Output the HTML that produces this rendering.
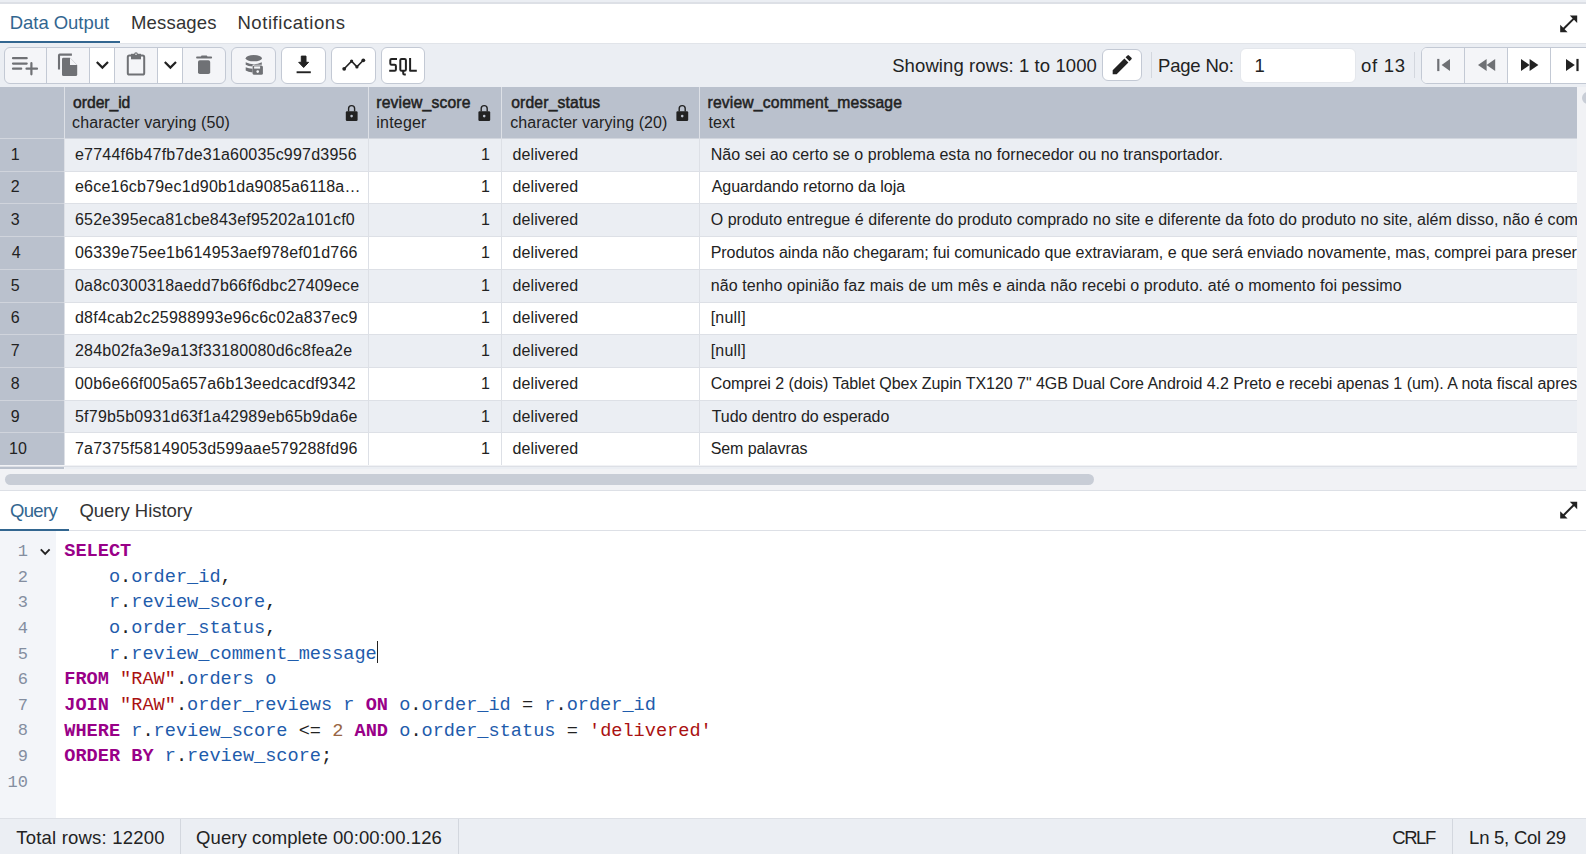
<!DOCTYPE html><html><head><meta charset="utf-8"><style>
*{box-sizing:border-box}
html,body{margin:0;padding:0}
body{width:1586px;height:854px;overflow:hidden;position:relative;background:#fff;font-family:"Liberation Sans",sans-serif;color:#222}
.a{position:absolute}
.t{position:absolute;white-space:pre;font-family:"Liberation Sans",sans-serif}
.row{position:absolute;left:65px;width:1512px;border-bottom:1px solid #dde0e6}
.code{position:absolute;left:64.3px;font-family:"Liberation Mono",monospace;font-size:18.6px;line-height:18.6px;white-space:pre}
.ln{position:absolute;left:0;width:28px;text-align:right;font-family:"Liberation Mono",monospace;font-size:17px;line-height:17px;color:#848ea0}
.btn{position:absolute;top:47px;height:37px;border:1px solid #c3c9d4;background:#fff}
.dis{background:#f4f5f8}
</style></head><body><div class="a" style="left:0;top:0;width:1586px;height:2px;background:#ebeef3"></div>
<div class="a" style="left:0;top:2px;width:1586px;height:2px;background:#dde0e6"></div>
<div class="a" style="left:0;top:41px;width:120px;height:2px;background:#326690"></div>
<div class="a" style="left:0;top:43px;width:1586px;height:44px;background:#ebeef3"></div>
<div class="a" style="left:120px;top:43px;width:1466px;height:1px;background:#e1e4e9"></div>
<div class="btn dis" style="left:4px;width:222px;border-radius:6px;overflow:hidden"><div class="a" style="left:85px;top:0;width:25px;height:35px;background:#fff"></div><div class="a" style="left:153px;top:0;width:25px;height:35px;background:#fff"></div></div>
<div class="a" style="left:46px;top:47px;width:1px;height:37px;background:#c3c9d4"></div>
<div class="a" style="left:89px;top:47px;width:1px;height:37px;background:#c3c9d4"></div>
<div class="a" style="left:114px;top:47px;width:1px;height:37px;background:#c3c9d4"></div>
<div class="a" style="left:157px;top:47px;width:1px;height:37px;background:#c3c9d4"></div>
<div class="a" style="left:182px;top:47px;width:1px;height:37px;background:#c3c9d4"></div>
<div class="btn dis" style="left:231px;width:45px;border-radius:6px"></div>
<div class="btn" style="left:281px;width:45px;border-radius:6px"></div>
<div class="btn" style="left:331px;width:45px;border-radius:6px"></div>
<div class="btn" style="left:381px;width:44px;border-radius:6px"></div>
<div class="btn" style="left:1102px;top:49px;width:40px;height:32px;border-radius:6px"></div>
<div class="a" style="left:1151px;top:52px;width:1px;height:26px;background:#d3d7de"></div>
<div class="a" style="left:1414px;top:52px;width:1px;height:26px;background:#d3d7de"></div>
<div class="a" style="left:1240px;top:48px;width:116px;height:35px;border-radius:6px;background:#fff;border:1px solid #e4e7ec"></div>
<div class="btn" style="left:1421px;width:180px;border-radius:6px;overflow:hidden"><div class="a" style="left:0;top:0;width:86px;height:35px;background:#f4f5f8"></div></div>
<div class="a" style="left:1464px;top:47px;width:1px;height:37px;background:#c3c9d4"></div>
<div class="a" style="left:1507px;top:47px;width:1px;height:37px;background:#c3c9d4"></div>
<div class="a" style="left:1550px;top:47px;width:1px;height:37px;background:#c3c9d4"></div>
<div class="a" style="left:0;top:87px;width:1577px;height:51px;background:#bac1cd"></div>
<div class="a" style="left:0;top:138px;width:64px;height:327px;background:#bac1cd"></div>
<div class="row" style="top:138.90px;height:32.73px;background:#ebeef3"></div>
<div class="row" style="top:171.63px;height:32.73px;background:#ffffff"></div>
<div class="row" style="top:204.36px;height:32.73px;background:#ebeef3"></div>
<div class="row" style="top:237.09px;height:32.73px;background:#ffffff"></div>
<div class="row" style="top:269.82px;height:32.73px;background:#ebeef3"></div>
<div class="row" style="top:302.55px;height:32.73px;background:#ffffff"></div>
<div class="row" style="top:335.28px;height:32.73px;background:#ebeef3"></div>
<div class="row" style="top:368.01px;height:32.73px;background:#ffffff"></div>
<div class="row" style="top:400.74px;height:32.73px;background:#ebeef3"></div>
<div class="row" style="top:433.47px;height:32.73px;background:#ffffff"></div>
<div class="a" style="left:0;top:170.63px;width:64px;height:1px;background:#d0d4dc"></div>
<div class="a" style="left:0;top:203.36px;width:64px;height:1px;background:#d0d4dc"></div>
<div class="a" style="left:0;top:236.09px;width:64px;height:1px;background:#d0d4dc"></div>
<div class="a" style="left:0;top:268.82px;width:64px;height:1px;background:#d0d4dc"></div>
<div class="a" style="left:0;top:301.55px;width:64px;height:1px;background:#d0d4dc"></div>
<div class="a" style="left:0;top:334.28px;width:64px;height:1px;background:#d0d4dc"></div>
<div class="a" style="left:0;top:367.01px;width:64px;height:1px;background:#d0d4dc"></div>
<div class="a" style="left:0;top:399.74px;width:64px;height:1px;background:#d0d4dc"></div>
<div class="a" style="left:0;top:432.47px;width:64px;height:1px;background:#d0d4dc"></div>
<div class="a" style="left:0;top:465.20px;width:64px;height:1px;background:#d0d4dc"></div>
<div class="a" style="left:0;top:137.5px;width:1577px;height:1px;background:#d2d6de"></div>
<div class="a" style="left:64px;top:87px;width:1px;height:378px;background:#dde0e6"></div>
<div class="a" style="left:368px;top:87px;width:1px;height:378px;background:#dde0e6"></div>
<div class="a" style="left:501px;top:87px;width:1px;height:378px;background:#dde0e6"></div>
<div class="a" style="left:699px;top:87px;width:1px;height:378px;background:#dde0e6"></div>
<div class="a" style="left:1577px;top:87px;width:9px;height:378px;background:#f1f2f5"></div>
<div class="a" style="left:1581.6px;top:92px;width:12px;height:12px;border-radius:6px;background:#c8cdd6"></div>
<div class="a" style="left:0;top:465px;width:1586px;height:25px;background:#f1f2f5"></div>
<div class="a" style="left:0;top:465.6px;width:1577px;height:1.4px;background:#dde0e6"></div>
<div class="a" style="left:0;top:467px;width:64px;height:2px;background:#bac1cd"></div>
<div class="a" style="left:65px;top:467px;width:1512px;height:2px;background:#ebeef3"></div>
<div class="a" style="left:5px;top:473.5px;width:1089px;height:11px;border-radius:5.5px;background:#c8cdd6"></div>
<div class="a" style="left:0;top:490px;width:1586px;height:1px;background:#dde0e6"></div>
<div class="a" style="left:0;top:530px;width:1586px;height:1px;background:#dde0e6"></div>
<div class="a" style="left:0;top:529px;width:69px;height:2px;background:#326690"></div>
<div class="a" style="left:0;top:531px;width:56px;height:287px;background:#f3f5f9"></div>
<div class="a" style="left:0;top:818px;width:1586px;height:36px;background:#ebeef3;border-top:1px solid #dde0e6"></div>
<div class="a" style="left:180px;top:819px;width:1px;height:35px;background:#d3d7de"></div>
<div class="a" style="left:458px;top:819px;width:1px;height:35px;background:#d3d7de"></div>
<div class="a" style="left:1452px;top:819px;width:1px;height:35px;background:#d3d7de"></div>
<span class="t" style="left:9.80px;top:13.54px;font-size:18.5px;line-height:18.5px;color:#326690;letter-spacing:-0.050px;">Data Output</span>
<span class="t" style="left:131.00px;top:13.54px;font-size:18.5px;line-height:18.5px;color:#333;letter-spacing:0.171px;">Messages</span>
<span class="t" style="left:237.40px;top:13.54px;font-size:18.5px;line-height:18.5px;color:#333;letter-spacing:0.567px;">Notifications</span>
<span class="t" style="left:892.20px;top:56.64px;font-size:18.5px;line-height:18.5px;letter-spacing:0.095px;">Showing rows: 1 to 1000</span>
<span class="t" style="left:1158.00px;top:56.64px;font-size:18.5px;line-height:18.5px;letter-spacing:-0.186px;">Page No:</span>
<span class="t" style="left:1254.60px;top:56.64px;font-size:18.5px;line-height:18.5px;">1</span>
<span class="t" style="left:1361.00px;top:56.64px;font-size:18.5px;line-height:18.5px;letter-spacing:0.750px;">of 13</span>
<span class="t" style="left:73.10px;top:94.91px;font-size:15.7px;line-height:15.7px;-webkit-text-stroke:0.5px #222;letter-spacing:-0.043px;">order_id</span>
<span class="t" style="left:376.30px;top:94.91px;font-size:15.7px;line-height:15.7px;-webkit-text-stroke:0.5px #222;letter-spacing:0.155px;">review_score</span>
<span class="t" style="left:511.20px;top:94.91px;font-size:15.7px;line-height:15.7px;-webkit-text-stroke:0.5px #222;letter-spacing:0.164px;">order_status</span>
<span class="t" style="left:707.50px;top:94.91px;font-size:15.7px;line-height:15.7px;-webkit-text-stroke:0.5px #222;letter-spacing:0.167px;">review_comment_message</span>
<span class="t" style="left:72.10px;top:115.46px;font-size:16px;line-height:16px;letter-spacing:0.095px;">character varying (50)</span>
<span class="t" style="left:376.30px;top:115.46px;font-size:16px;line-height:16px;letter-spacing:0.200px;">integer</span>
<span class="t" style="left:510.20px;top:115.46px;font-size:16px;line-height:16px;letter-spacing:0.071px;">character varying (20)</span>
<span class="t" style="left:708.50px;top:115.46px;font-size:16px;line-height:16px;letter-spacing:0.100px;">text</span>
<span class="t" style="left:10.80px;top:146.66px;font-size:16px;line-height:16px;">1</span>
<span class="t" style="left:75.00px;top:146.66px;font-size:16px;line-height:16px;letter-spacing:0.213px;">e7744f6b47fb7de31a60035c997d3956</span>
<span class="t" style="left:481.10px;top:146.66px;font-size:16px;line-height:16px;">1</span>
<span class="t" style="left:512.60px;top:146.66px;font-size:16px;line-height:16px;letter-spacing:0.075px;">delivered</span>
<span class="t" style="left:10.80px;top:179.39px;font-size:16px;line-height:16px;">2</span>
<span class="t" style="left:75.00px;top:179.39px;font-size:16px;line-height:16px;letter-spacing:0.213px;">e6ce16cb79ec1d90b1da9085a6118a…</span>
<span class="t" style="left:481.10px;top:179.39px;font-size:16px;line-height:16px;">1</span>
<span class="t" style="left:512.60px;top:179.39px;font-size:16px;line-height:16px;letter-spacing:0.075px;">delivered</span>
<span class="t" style="left:10.80px;top:212.12px;font-size:16px;line-height:16px;">3</span>
<span class="t" style="left:75.00px;top:212.12px;font-size:16px;line-height:16px;letter-spacing:0.213px;">652e395eca81cbe843ef95202a101cf0</span>
<span class="t" style="left:481.10px;top:212.12px;font-size:16px;line-height:16px;">1</span>
<span class="t" style="left:512.60px;top:212.12px;font-size:16px;line-height:16px;letter-spacing:0.075px;">delivered</span>
<span class="t" style="left:11.80px;top:244.85px;font-size:16px;line-height:16px;">4</span>
<span class="t" style="left:75.00px;top:244.85px;font-size:16px;line-height:16px;letter-spacing:0.213px;">06339e75ee1b614953aef978ef01d766</span>
<span class="t" style="left:481.10px;top:244.85px;font-size:16px;line-height:16px;">1</span>
<span class="t" style="left:512.60px;top:244.85px;font-size:16px;line-height:16px;letter-spacing:0.075px;">delivered</span>
<span class="t" style="left:10.80px;top:277.58px;font-size:16px;line-height:16px;">5</span>
<span class="t" style="left:75.00px;top:277.58px;font-size:16px;line-height:16px;letter-spacing:0.213px;">0a8c0300318aedd7b66f6dbc27409ece</span>
<span class="t" style="left:481.10px;top:277.58px;font-size:16px;line-height:16px;">1</span>
<span class="t" style="left:512.60px;top:277.58px;font-size:16px;line-height:16px;letter-spacing:0.075px;">delivered</span>
<span class="t" style="left:10.80px;top:310.31px;font-size:16px;line-height:16px;">6</span>
<span class="t" style="left:75.00px;top:310.31px;font-size:16px;line-height:16px;letter-spacing:0.213px;">d8f4cab2c25988993e96c6c02a837ec9</span>
<span class="t" style="left:481.10px;top:310.31px;font-size:16px;line-height:16px;">1</span>
<span class="t" style="left:512.60px;top:310.31px;font-size:16px;line-height:16px;letter-spacing:0.075px;">delivered</span>
<span class="t" style="left:10.80px;top:343.04px;font-size:16px;line-height:16px;">7</span>
<span class="t" style="left:75.00px;top:343.04px;font-size:16px;line-height:16px;letter-spacing:0.213px;">284b02fa3e9a13f33180080d6c8fea2e</span>
<span class="t" style="left:481.10px;top:343.04px;font-size:16px;line-height:16px;">1</span>
<span class="t" style="left:512.60px;top:343.04px;font-size:16px;line-height:16px;letter-spacing:0.075px;">delivered</span>
<span class="t" style="left:10.80px;top:375.77px;font-size:16px;line-height:16px;">8</span>
<span class="t" style="left:75.00px;top:375.77px;font-size:16px;line-height:16px;letter-spacing:0.213px;">00b6e66f005a657a6b13eedcacdf9342</span>
<span class="t" style="left:481.10px;top:375.77px;font-size:16px;line-height:16px;">1</span>
<span class="t" style="left:512.60px;top:375.77px;font-size:16px;line-height:16px;letter-spacing:0.075px;">delivered</span>
<span class="t" style="left:10.80px;top:408.50px;font-size:16px;line-height:16px;">9</span>
<span class="t" style="left:75.00px;top:408.50px;font-size:16px;line-height:16px;letter-spacing:0.213px;">5f79b5b0931d63f1a42989eb65b9da6e</span>
<span class="t" style="left:481.10px;top:408.50px;font-size:16px;line-height:16px;">1</span>
<span class="t" style="left:512.60px;top:408.50px;font-size:16px;line-height:16px;letter-spacing:0.075px;">delivered</span>
<span class="t" style="left:9.00px;top:441.23px;font-size:16px;line-height:16px;">10</span>
<span class="t" style="left:75.00px;top:441.23px;font-size:16px;line-height:16px;letter-spacing:0.213px;">7a7375f58149053d599aae579288fd96</span>
<span class="t" style="left:481.10px;top:441.23px;font-size:16px;line-height:16px;">1</span>
<span class="t" style="left:512.60px;top:441.23px;font-size:16px;line-height:16px;letter-spacing:0.075px;">delivered</span>
<span class="t" style="left:10.10px;top:501.74px;font-size:18.5px;line-height:18.5px;color:#326690;letter-spacing:-0.700px;">Query</span>
<span class="t" style="left:79.50px;top:501.74px;font-size:18.5px;line-height:18.5px;color:#333;letter-spacing:-0.033px;">Query History</span>
<span class="t" style="left:16.30px;top:828.84px;font-size:18.5px;line-height:18.5px;letter-spacing:0.200px;">Total rows: 12200</span>
<span class="t" style="left:196.10px;top:828.84px;font-size:18.5px;line-height:18.5px;letter-spacing:0.077px;">Query complete 00:00:00.126</span>
<span class="t" style="left:1392.20px;top:828.84px;font-size:18.5px;line-height:18.5px;letter-spacing:-1.400px;">CRLF</span>
<span class="t" style="left:1469.10px;top:828.84px;font-size:18.5px;line-height:18.5px;letter-spacing:-0.245px;">Ln 5, Col 29</span>
<div class="a" style="left:700px;top:138px;width:877px;height:327px;overflow:hidden"><span class="t" style="left:10.70px;top:8.66px;font-size:16px;line-height:16px;letter-spacing:0.062px">Não sei ao certo se o problema esta no fornecedor ou no transportador.</span><span class="t" style="left:11.70px;top:41.39px;font-size:16px;line-height:16px;letter-spacing:-0.020px">Aguardando retorno da loja</span><span class="t" style="left:10.70px;top:74.12px;font-size:16px;line-height:16px;letter-spacing:0.045px">O produto entregue é diferente do produto comprado no site e diferente da foto do produto no site, além disso, não é com</span><span class="t" style="left:10.70px;top:106.85px;font-size:16px;line-height:16px;letter-spacing:-0.032px">Produtos ainda não chegaram; fui comunicado que extraviaram, e que será enviado novamente, mas, comprei para preser</span><span class="t" style="left:10.70px;top:139.58px;font-size:16px;line-height:16px;letter-spacing:0.076px">não tenho opinião faz mais de um mês e ainda não recebi o produto. até o momento foi pessimo</span><span class="t" style="left:10.70px;top:172.31px;font-size:16px;line-height:16px;letter-spacing:0.220px">[null]</span><span class="t" style="left:10.70px;top:205.04px;font-size:16px;line-height:16px;letter-spacing:0.220px">[null]</span><span class="t" style="left:10.70px;top:237.77px;font-size:16px;line-height:16px;letter-spacing:-0.040px">Comprei 2 (dois) Tablet Qbex Zupin TX120 7&quot; 4GB Dual Core Android 4.2 Preto e recebi apenas 1 (um). A nota fiscal apres</span><span class="t" style="left:11.70px;top:270.50px;font-size:16px;line-height:16px;letter-spacing:-0.068px">Tudo dentro do esperado</span><span class="t" style="left:10.70px;top:303.23px;font-size:16px;line-height:16px;letter-spacing:-0.091px">Sem palavras</span></div>
<div class="code" style="top:543.14px"><span style="color:#990088;font-weight:bold;">SELECT</span></div>
<div class="ln" style="top:543.07px">1</div>
<div class="code" style="top:568.77px"><span style="color:#222;">    </span><span style="color:#1f5cac;">o</span><span style="color:#222;">.</span><span style="color:#1f5cac;">order_id</span><span style="color:#222;">,</span></div>
<div class="ln" style="top:568.70px">2</div>
<div class="code" style="top:594.40px"><span style="color:#222;">    </span><span style="color:#1f5cac;">r</span><span style="color:#222;">.</span><span style="color:#1f5cac;">review_score</span><span style="color:#222;">,</span></div>
<div class="ln" style="top:594.33px">3</div>
<div class="code" style="top:620.03px"><span style="color:#222;">    </span><span style="color:#1f5cac;">o</span><span style="color:#222;">.</span><span style="color:#1f5cac;">order_status</span><span style="color:#222;">,</span></div>
<div class="ln" style="top:619.96px">4</div>
<div class="code" style="top:645.66px"><span style="color:#222;">    </span><span style="color:#1f5cac;">r</span><span style="color:#222;">.</span><span style="color:#1f5cac;">review_comment_message</span></div>
<div class="ln" style="top:645.59px">5</div>
<div class="code" style="top:671.29px"><span style="color:#990088;font-weight:bold;">FROM</span><span style="color:#222;"> </span><span style="color:#aa1111;">&quot;RAW&quot;</span><span style="color:#222;">.</span><span style="color:#1f5cac;">orders</span><span style="color:#222;"> </span><span style="color:#1f5cac;">o</span></div>
<div class="ln" style="top:671.22px">6</div>
<div class="code" style="top:696.92px"><span style="color:#990088;font-weight:bold;">JOIN</span><span style="color:#222;"> </span><span style="color:#aa1111;">&quot;RAW&quot;</span><span style="color:#222;">.</span><span style="color:#1f5cac;">order_reviews</span><span style="color:#222;"> </span><span style="color:#1f5cac;">r</span><span style="color:#222;"> </span><span style="color:#990088;font-weight:bold;">ON</span><span style="color:#222;"> </span><span style="color:#1f5cac;">o</span><span style="color:#222;">.</span><span style="color:#1f5cac;">order_id</span><span style="color:#222;"> </span><span style="color:#222;">=</span><span style="color:#222;"> </span><span style="color:#1f5cac;">r</span><span style="color:#222;">.</span><span style="color:#1f5cac;">order_id</span></div>
<div class="ln" style="top:696.85px">7</div>
<div class="code" style="top:722.55px"><span style="color:#990088;font-weight:bold;">WHERE</span><span style="color:#222;"> </span><span style="color:#1f5cac;">r</span><span style="color:#222;">.</span><span style="color:#1f5cac;">review_score</span><span style="color:#222;"> </span><span style="color:#222;">&lt;</span><span style="color:#222;">=</span><span style="color:#222;"> </span><span style="color:#996644;">2</span><span style="color:#222;"> </span><span style="color:#990088;font-weight:bold;">AND</span><span style="color:#222;"> </span><span style="color:#1f5cac;">o</span><span style="color:#222;">.</span><span style="color:#1f5cac;">order_status</span><span style="color:#222;"> </span><span style="color:#222;">=</span><span style="color:#222;"> </span><span style="color:#aa1111;">&#x27;delivered&#x27;</span></div>
<div class="ln" style="top:722.48px">8</div>
<div class="code" style="top:748.18px"><span style="color:#990088;font-weight:bold;">ORDER</span><span style="color:#222;"> </span><span style="color:#990088;font-weight:bold;">BY</span><span style="color:#222;"> </span><span style="color:#1f5cac;">r</span><span style="color:#222;">.</span><span style="color:#1f5cac;">review_score</span><span style="color:#222;">;</span></div>
<div class="ln" style="top:748.11px">9</div>
<div class="code" style="top:773.81px"></div>
<div class="ln" style="top:773.74px">10</div>
<div class="a" style="left:377px;top:641px;width:1px;height:22px;background:#222"></div>

<svg class="a" style="left:0;top:0" width="1586" height="854" viewBox="0 0 1586 854">
 <!-- playlist add -->
 <g stroke="#6f7175" stroke-width="2.2" stroke-linecap="round" fill="none">
  <path d="M13 58.2H26.7M13 63.6H26.7M13 68.7H21.2M26.5 68.7H37M31.4 63.2V74.3"/>
 </g>
 <!-- copy -->
 <path d="M59 69.5V55.4Q59 54.6 59.8 54.6H71.9" stroke="#6f7175" stroke-width="2.1" fill="none"/>
 <path d="M63.4 57.8H70L77.2 65V74.4Q77.2 75.9 75.7 75.9H63.6Q62 75.9 62 74.4V59.2Q62 57.8 63.4 57.8Z" fill="#6f7175"/>
 <path d="M70 57.8V65H77.2" fill="#f4f5f8" />
 <!-- chevrons -->
 <path d="M96.8 62L102.4 67.6L108 62" stroke="#222" stroke-width="2.2" fill="none"/>
 <path d="M164.8 62L170.4 67.6L176 62" stroke="#222" stroke-width="2.2" fill="none"/>
 <!-- paste -->
 <rect x="127.8" y="55.6" width="16.4" height="19" rx="1.6" stroke="#6f7175" stroke-width="2" fill="none"/>
 <path d="M131 53.8H141V59.3H131Z" fill="#6f7175"/>
 <circle cx="136" cy="54" r="1.8" fill="#6f7175"/>
 <circle cx="136" cy="54.2" r="0.8" fill="#f4f5f8"/>
 <!-- trash -->
 <path d="M197 57.5H211.2" stroke="#6f7175" stroke-width="1.8" stroke-linecap="round"/>
 <path d="M201.5 55.6H206.8L207.8 57.5H200.5Z" fill="#6f7175"/>
 <rect x="198" y="60.2" width="12.2" height="13.8" rx="1.8" fill="#6f7175"/>
 <!-- db save -->
 <ellipse cx="253.8" cy="58.2" rx="8.1" ry="3.1" fill="#6f7175"/>
 <path d="M245.7 62.2Q253.8 66.5 261.8 62.2V64.8H252.6V66.5Q248 66.3 245.7 64.8Z" fill="#6f7175"/>
 <path d="M245.7 67.2Q248.5 68.6 252.6 68.8V72.5Q248 72.3 245.7 70.6Z" fill="#6f7175"/>
 <rect x="252.6" y="65.4" width="10.3" height="9.4" rx="1.6" fill="#6f7175"/>
 <rect x="254.1" y="66.4" width="6" height="2.2" fill="#f4f5f8"/>
 <circle cx="257.7" cy="71.6" r="1.3" fill="#f4f5f8"/>
 <!-- download -->
 <path d="M301.3 56.1H306V62.3H308.6L303.65 67.5L298.7 62.3H301.3Z" fill="#222" stroke="#222" stroke-width="1" stroke-linejoin="round"/>
 <rect x="296.6" y="71.3" width="14.2" height="1.9" fill="#222"/>
 <!-- graph -->
 <polyline points="344.2,68.8 351.6,61.1 356.9,66.9 363.3,60.3" stroke="#222" stroke-width="1.6" fill="none"/>
 <circle cx="344.2" cy="68.8" r="1.9" fill="#222"/>
 <circle cx="351.6" cy="61.1" r="1.6" fill="#222"/>
 <circle cx="356.9" cy="66.9" r="1.6" fill="#222"/>
 <circle cx="363.3" cy="60.3" r="1.9" fill="#222"/>
 <!-- SQL -->
 <g stroke="#222" stroke-width="2" fill="none" stroke-linejoin="round">
  <path d="M397 58.9H391.6Q390.3 58.9 390.3 60.2V63.5Q390.3 64.8 391.6 64.8H394.6Q395.9 64.8 395.9 66.1V69.5Q395.9 70.8 394.6 70.8H389.2"/>
  <path d="M401.6 58.9H404.6Q405.9 58.9 405.9 60.2V69.5Q405.9 70.8 404.6 70.8H401.6Q400.3 70.8 400.3 69.5V60.2Q400.3 58.9 401.6 58.9Z"/>
  <path d="M403.2 70.8V73.2Q403.2 74.4 404.4 74.4H405.8"/>
  <path d="M410.1 57.9V70.8H416.8"/>
 </g>
 <!-- pencil -->
 <g transform="translate(1109.5 51.9) scale(1.06)">
  <path d="M3 17.25V21h3.75L17.81 9.94l-3.75-3.75L3 17.25zM20.71 7.04a.996.996 0 0 0 0-1.41l-2.34-2.34a.996.996 0 0 0-1.41 0l-1.83 1.83 3.75 3.75 1.83-1.83z" fill="#222"/>
 </g>
 <!-- pagination -->
 <g fill="#6f7175">
  <rect x="1437.2" y="58.9" width="2.2" height="12.2"/>
  <path d="M1450 58.9V71.1L1441.6 65Z"/>
  <path d="M1486.6 58.9V71.1L1478 65Z"/>
  <path d="M1495.2 58.9V71.1L1486.6 65Z"/>
 </g>
 <g fill="#222">
  <path d="M1521 58.9V71.1L1529.6 65Z"/>
  <path d="M1529.6 58.9V71.1L1538.4 65Z"/>
  <path d="M1566 58.9V71.1L1574.8 65Z"/>
  <rect x="1576.4" y="58.9" width="2.2" height="12.2"/>
 </g>
 <!-- expand icons -->
 <g fill="#222">
  <path d="M1569.8 15.5H1577.2V22.9Z"/>
  <path d="M1560.2 24.8V32.2H1567.6Z"/>
  <path d="M1562.6 29.8L1574.8 17.6" stroke="#222" stroke-width="2"/>
  <path d="M1569.8 501.8H1577.2V509.2Z"/>
  <path d="M1560.2 511.2V518.6H1567.6Z"/>
  <path d="M1562.6 516.2L1574.8 504" stroke="#222" stroke-width="2"/>
 </g>
 <!-- locks -->
 <g transform="translate(0 0)">
  <path d="M348.6 111.5V108.4Q348.6 105.6 351.6 105.6Q354.6 105.6 354.6 108.4V111.5" stroke="#222" stroke-width="1.4" fill="none"/>
  <rect x="345.8" y="111.2" width="11.8" height="9.8" rx="1.2" fill="#222"/>
  <circle cx="351.6" cy="116.1" r="1.3" fill="#bac1cd"/>
 </g>
 <g transform="translate(132.6 0)">
  <path d="M348.6 111.5V108.4Q348.6 105.6 351.6 105.6Q354.6 105.6 354.6 108.4V111.5" stroke="#222" stroke-width="1.4" fill="none"/>
  <rect x="345.8" y="111.2" width="11.8" height="9.8" rx="1.2" fill="#222"/>
  <circle cx="351.6" cy="116.1" r="1.3" fill="#bac1cd"/>
 </g>
 <g transform="translate(330.6 0)">
  <path d="M348.6 111.5V108.4Q348.6 105.6 351.6 105.6Q354.6 105.6 354.6 108.4V111.5" stroke="#222" stroke-width="1.4" fill="none"/>
  <rect x="345.8" y="111.2" width="11.8" height="9.8" rx="1.2" fill="#222"/>
  <circle cx="351.6" cy="116.1" r="1.3" fill="#bac1cd"/>
 </g>
 <!-- fold chevron -->
 <path d="M40.8 549.4L45.2 553.8L49.6 549.4" stroke="#222" stroke-width="1.9" fill="none"/>
</svg>
</body></html>
